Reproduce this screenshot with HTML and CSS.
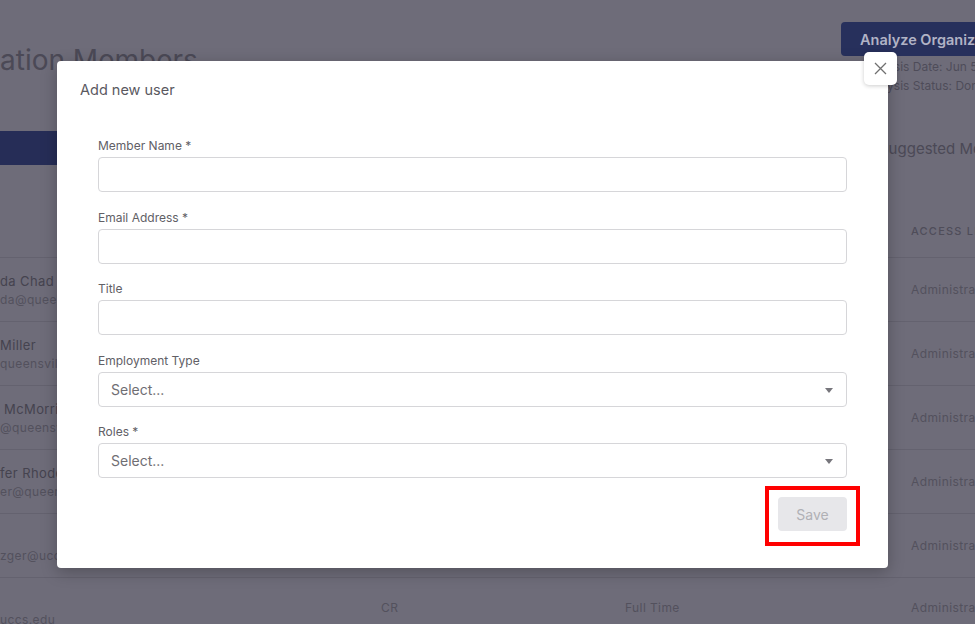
FILE: index.html
```html
<!DOCTYPE html>
<html lang="en">
<head>
  <meta charset="UTF-8" />
  <meta name="viewport" content="width=device-width, initial-scale=1.0" />
  <title>Organization Members</title>
  <link rel="stylesheet" href="styles.css">
</head>
<body>

  <!-- Page behind the dialog (dimmed) -->
  <div class="page">
    <div class="page-head">
      <h1 class="page-title">ation Members</h1>
      <div class="analysis">
        <button class="analyze-btn">Analyze Organization</button>
        <div class="analysis-meta">Analysis Date: Jun 5, 2023</div>
        <div class="analysis-meta">Analysis Status: Done</div>
      </div>
    </div>

    <div class="tabs">
      <div class="tab active"></div>
      <div class="tab">Suggested Members</div>
    </div>

    <div class="table">
      <div class="row head">
        <div></div>
        <div>Title</div>
        <div>Employment Type</div>
        <div>Access Level</div>
      </div>
      <div class="row">
        <div class="member"><span class="name">da Chad</span><span class="email">da@queensville.org</span></div>
        <div>CR</div><div>Full Time</div><div>Administrator</div>
      </div>
      <div class="row">
        <div class="member"><span class="name">Miller</span><span class="email">queensville.org</span></div>
        <div>CR</div><div>Full Time</div><div>Administrator</div>
      </div>
      <div class="row">
        <div class="member"><span class="name">&nbsp;McMorris</span><span class="email">@queensville.org</span></div>
        <div>CR</div><div>Full Time</div><div>Administrator</div>
      </div>
      <div class="row">
        <div class="member"><span class="name">fer Rhodes</span><span class="email">er@queensville.org</span></div>
        <div>CR</div><div>Full Time</div><div>Administrator</div>
      </div>
      <div class="row">
        <div class="member"><span class="name">&nbsp;</span><span class="email">zger@uccs.edu</span></div>
        <div>CR</div><div>Full Time</div><div>Administrator</div>
      </div>
      <div class="row">
        <div class="member"><span class="name">&nbsp;</span><span class="email">uccs.edu</span></div>
        <div class="up">CR</div><div class="up">Full Time</div><div class="up">Administrator</div>
      </div>
    </div>
  </div>

  <!-- Add user dialog -->
  <div class="modal">
    <button class="close-btn" aria-label="Close">
      <svg width="13" height="13" viewBox="0 0 13 13"><path d="M1 1L12 12M12 1L1 12" stroke="#707070" stroke-width="1.3" fill="none"/></svg>
    </button>
    <div class="modal-title">Add new user</div>
    <form class="modal-body">
      <div class="field">
        <label>Member Name *</label>
        <input type="text">
      </div>
      <div class="field">
        <label>Email Address *</label>
        <input type="text">
      </div>
      <div class="field">
        <label>Title</label>
        <input type="text">
      </div>
      <div class="field">
        <label>Employment Type</label>
        <div class="select">Select...<span class="caret"></span></div>
      </div>
      <div class="field">
        <label>Roles *</label>
        <div class="select">Select...<span class="caret"></span></div>
      </div>
      <div class="actions">
        <span class="highlight"><button type="button" class="save-btn" disabled>Save</button></span>
      </div>
    </form>
  </div>

</body>
</html>
```

FILE: styles.css
```css
body {
  margin: 0;
  height: 624px;
  overflow: hidden;
  background: #6e6c79;
  font-family: 'Inter', 'Noto Sans', sans-serif;
  position: relative;
}

/* ---- dimmed page ---- */
.page {
  color: #4b4956;
}

.page-head {
  display: flex;
  justify-content: space-between;
  height: 131px;
}

.page-title {
  margin: 43px 0 0;
  font-size: 28px;
  font-weight: 400;
  line-height: 34px;
  color: #4b4956;
}

.analysis {
  width: 134px;
  padding-top: 22px;
}

.analyze-btn {
  display: block;
  width: 160px;
  height: 34px;
  border: none;
  border-radius: 4px 0 0 4px;
  background: #27305c;
  color: #b1b3c5;
  font-family: inherit;
  font-size: 14.5px;
  font-weight: 600;
  text-align: left;
  padding: 0 0 0 19px;
  white-space: nowrap;
  margin-bottom: 1px;
}

.analysis-meta {
  font-size: 12px;
  line-height: 19px;
  margin-left: 21px;
  white-space: nowrap;
  color: #4e4c59;
}

.tabs {
  display: flex;
  justify-content: space-between;
  height: 34px;
  align-items: center;
}

.tab.active {
  width: 57px;
  height: 34px;
  background: #262d57;
}

.tab {
  width: 96px;
  font-size: 15px;
  white-space: nowrap;
  color: #4b4956;
}

.table {
  margin-top: 40px;
}

.row {
  display: grid;
  grid-template-columns: 381px 244px 286px 1fr;
  height: 64px;
  box-sizing: border-box;
  align-items: center;
  border-top: 1px solid #64626f;
  font-size: 12px;
  letter-spacing: 0.4px;
  color: #53515d;
  white-space: nowrap;
  overflow: hidden;
}

.row.head {
  height: 52px;
  border-top: none;
  font-size: 11px;
  font-weight: 500;
  letter-spacing: 1.2px;
  text-transform: uppercase;
  color: #4f4d59;
}

.member {
  display: flex;
  flex-direction: column;
  gap: 3px;
}

.name {
  font-size: 13px;
  color: #45434f;
}

.email {
  color: #53515d;
}

.up {
  margin-bottom: 4px;
}

/* ---- modal ---- */
.modal {
  position: absolute;
  left: 57px;
  top: 61px;
  width: 831px;
  height: 507px;
  box-sizing: border-box;
  background: #fff;
  border-radius: 4px;
  box-shadow: 0 4px 16px rgba(0, 0, 0, 0.25);
  padding: 19px 0 22px;
}

.close-btn {
  position: absolute;
  top: -9px;
  right: -9px;
  width: 33px;
  height: 33px;
  border: none;
  border-radius: 5px;
  background: #fff;
  box-shadow: 0 1px 4px rgba(0, 0, 0, 0.2);
  display: flex;
  align-items: center;
  justify-content: center;
  padding: 0;
}

.modal-title {
  padding-left: 23px;
  font-size: 14.5px;
  line-height: 20px;
  color: #5a595f;
}

.modal-body {
  padding: 38px 41px 0;
}

.field {
  margin-bottom: 17.5px;
}

.field label {
  display: block;
  font-size: 12px;
  line-height: 16px;
  color: #616066;
  margin-bottom: 3px;
}

.field input,
.select {
  display: block;
  width: 100%;
  height: 35px;
  box-sizing: border-box;
  border: 1px solid #d6d6d9;
  border-radius: 4px;
  font-family: inherit;
  font-size: 14px;
}

.select {
  position: relative;
  padding: 0 12px;
  line-height: 33px;
  color: #6f6e73;
}

.caret {
  position: absolute;
  right: 13px;
  top: 15px;
  width: 0;
  height: 0;
  border-left: 4.5px solid transparent;
  border-right: 4.5px solid transparent;
  border-top: 5px solid #77767c;
}

.actions {
  display: flex;
  justify-content: flex-end;
  margin-top: -9.5px;
  margin-right: -13px;
}

.highlight {
  border: 4px solid #ff0000;
  padding: 7px 9px 11px;
}

.save-btn {
  display: block;
  width: 69px;
  height: 34px;
  border: none;
  border-radius: 4px;
  background: #e7e7ea;
  color: #b0b0b5;
  font-family: inherit;
  font-size: 14px;
}
```
